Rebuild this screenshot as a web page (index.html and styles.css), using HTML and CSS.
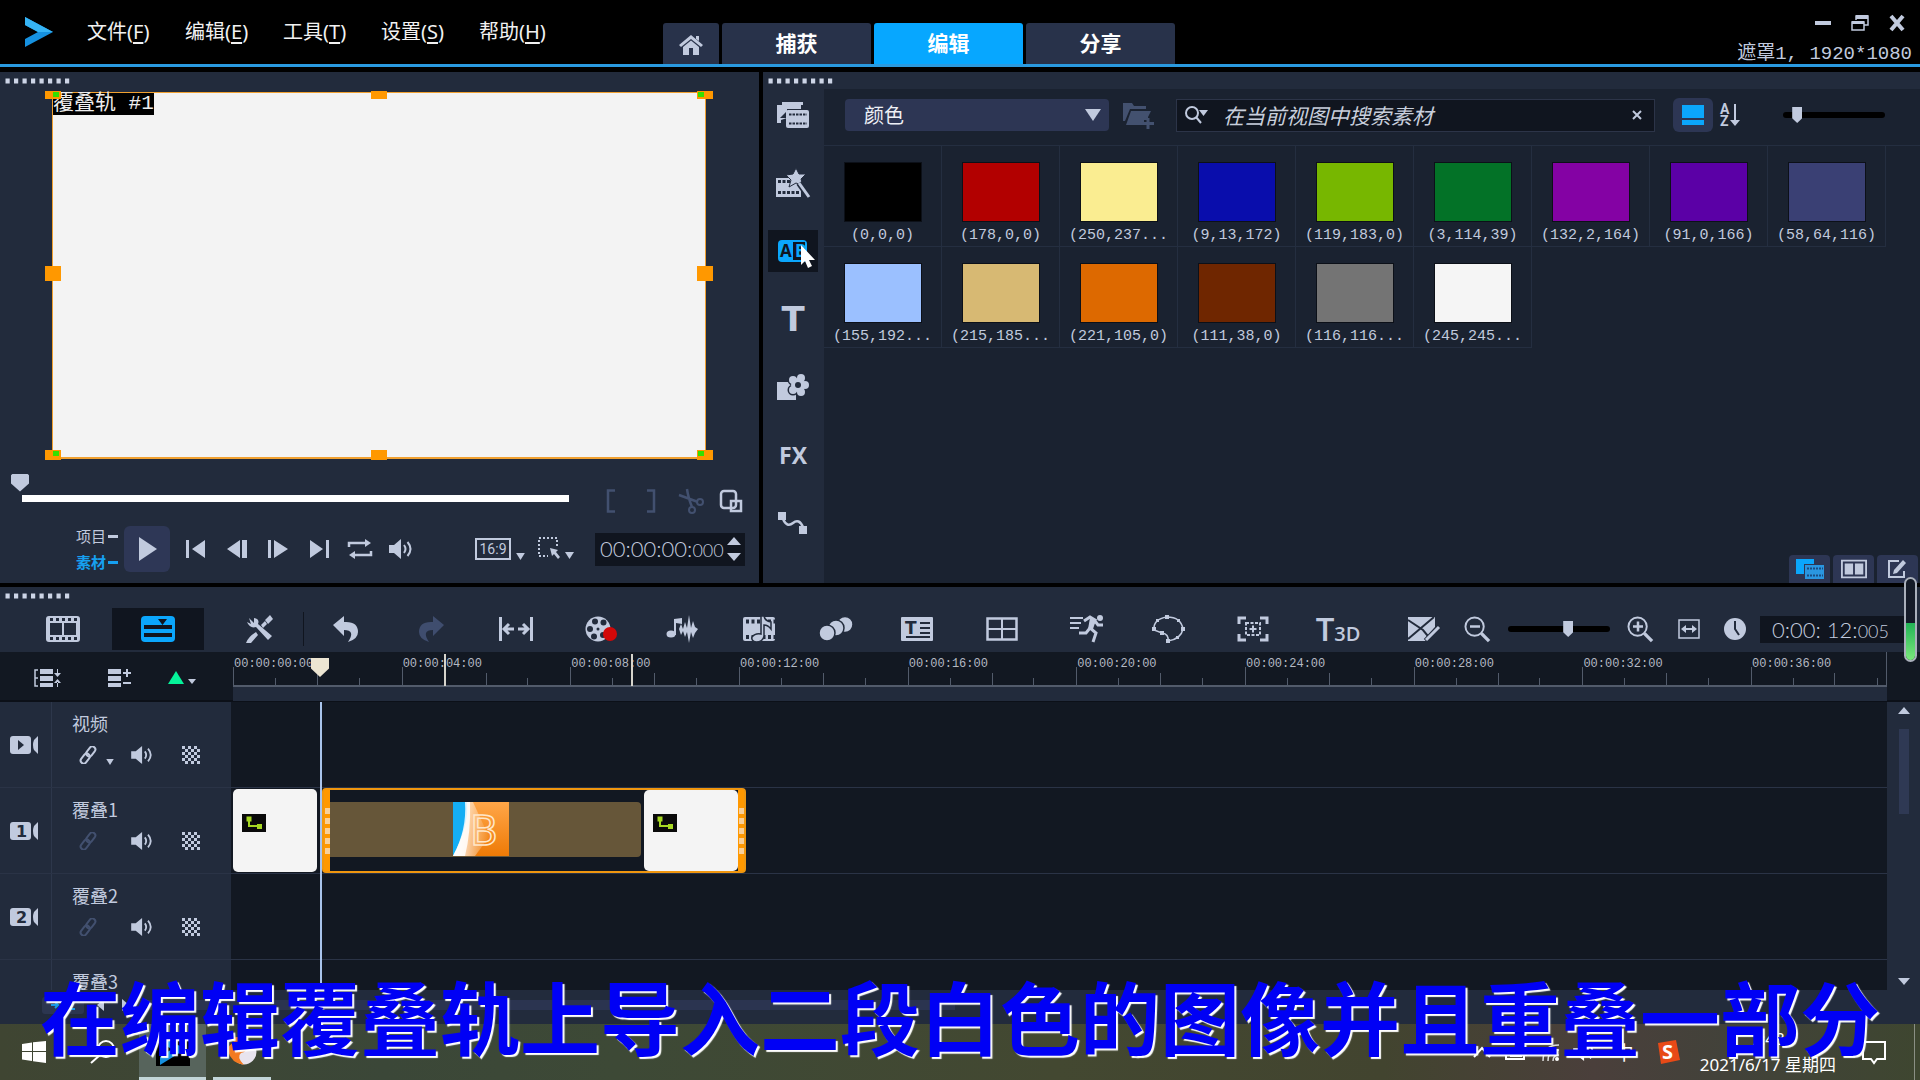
FILE: index.html
```html
<!DOCTYPE html>
<html lang="zh-CN">
<head>
<meta charset="utf-8">
<title>遮罩1</title>
<link rel="stylesheet" href="styles.css">
</head>
<body>
<svg class="defs" aria-hidden="true">
  <symbol id="grip" viewBox="0 0 64 6"><path d="M0 3H64" stroke="#cdd5e6" stroke-width="5" stroke-dasharray="4.2 4.3"/></symbol>
  <symbol id="down" viewBox="0 0 10 8"><path d="M0 0H10L5 8Z"/></symbol>
  <symbol id="speaker" viewBox="0 0 26 22"><path d="M0 7H5L12 1V21L5 15H0Z"/><path d="M15 7q3 4 0 8M18.500 4q6 7 0 14" fill="none" stroke="currentColor" stroke-width="2"/></symbol>
  <symbol id="link" viewBox="0 0 18 18"><g fill="none" stroke="currentColor" stroke-width="2" transform="rotate(-52 9 9)"><rect x="-1" y="6" width="11" height="6" rx="3"/><rect x="8" y="6" width="11" height="6" rx="3"/></g></symbol>
  <symbol id="checker" viewBox="0 0 18 18"><path d="M0 1.500H18M0 7.500H18M0 13.500H18" stroke="currentColor" stroke-width="3" stroke-dasharray="3 3"/><path d="M3 4.500H18M3 10.500H18M3 16.500H18" stroke="currentColor" stroke-width="3" stroke-dasharray="3 3"/></symbol>
  <symbol id="camera" viewBox="0 0 28 18"><rect width="21" height="18" rx="3"/><path d="M28 0V18L24 14Q22 9 24 4Z"/></symbol>
  <symbol id="path" viewBox="0 0 24 18"><rect width="24" height="18" fill="#0a0a0a"/><path d="M7 5V12H18" fill="none" stroke="#a6d822" stroke-width="2"/><rect x="4.500" y="2.500" width="5" height="5" fill="#a6d822"/><rect x="15" y="10" width="5" height="5" fill="#a6d822"/></symbol>
  <symbol id="lens" viewBox="0 0 28 28"><circle cx="11" cy="11" r="9.500" fill="none" stroke="currentColor" stroke-width="2"/><path d="M18 18L26 26" stroke="currentColor" stroke-width="3.500"/></symbol>
</svg>

<header class="titlebar">
  <svg class="logo" viewBox="0 0 28 30" width="28" height="30"><path d="M0 0L28 15L0 30V22L13 15L0 8Z" fill="#1691e0"/><path d="M0 0L28 15H13L0 8Z" fill="#36b4f5"/></svg>
  <nav class="menu">
    <a href="#">文件(<u>F</u>)</a><a href="#">编辑(<u>E</u>)</a><a href="#">工具(<u>T</u>)</a><a href="#">设置(<u>S</u>)</a><a href="#">帮助(<u>H</u>)</a>
  </nav>
  <nav class="tabs">
    <button class="tab home" aria-label="主页"><svg viewBox="0 0 24 20" width="24" height="20"><path d="M12 0L24 10L22 12L12 4L2 12L0 10Z"/><path d="M4 12L12 5.500L20 12V20H14V13H10V20H4ZM17 1H20V6L17 4Z"/></svg></button>
    <button class="tab">捕获</button>
    <button class="tab active">编辑</button>
    <button class="tab">分享</button>
  </nav>
  <div class="window-info">
    <div class="window-buttons">
      <button aria-label="最小化"><svg viewBox="0 0 18 18" width="18" height="18"><path d="M1 7H17V11H1Z"/></svg></button>
      <button aria-label="还原"><svg viewBox="0 0 18 18" width="18" height="18"><path d="M5 6V2H17V11H13M1 8H13V16H1Z" fill="none" stroke="currentColor" stroke-width="1.500"/><path d="M5 1H17V5H5ZM1 7H13V10H1Z"/></svg></button>
      <button aria-label="关闭"><svg viewBox="0 0 18 18" width="18" height="18"><path d="M3 2L15 16M15 2L3 16" stroke="currentColor" stroke-width="4"/></svg></button>
    </div>
    <div class="project-name">遮罩1, 1920*1080</div>
  </div>
</header>

<main class="workspace">
  <section class="preview">
    <svg class="grip"><use href="#grip"/></svg>
    <div class="canvas">
      <span class="canvas-label">覆叠轨 #1</span>
      <i class="handle tl"></i><i class="handle tc"></i><i class="handle tr"></i>
      <i class="handle ml"></i><i class="handle mr"></i>
      <i class="handle bl"></i><i class="handle bc"></i><i class="handle br"></i>
    </div>
    <div class="scrub-row">
      <input class="scrub" type="range" min="0" max="100" value="0" aria-label="播放位置">
      <div class="trim">
        <button class="dim" aria-label="标记开始"><svg viewBox="0 0 26 26" width="26" height="26"><path d="M17 2.500H10V23.500H17" fill="none" stroke="currentColor" stroke-width="2.500"/></svg></button>
        <button class="dim" aria-label="标记结束"><svg viewBox="0 0 26 26" width="26" height="26"><path d="M9 2.500H16V23.500H9" fill="none" stroke="currentColor" stroke-width="2.500"/></svg></button>
        <button class="dim" aria-label="分割"><svg viewBox="0 0 26 26" width="26" height="26"><path d="M9 1Q10 9 14 19M1 7L20 14" fill="none" stroke="currentColor" stroke-width="2.500"/><circle cx="22" cy="14" r="3" fill="none" stroke="currentColor" stroke-width="2"/><circle cx="14" cy="22" r="3" fill="none" stroke="currentColor" stroke-width="2"/></svg></button>
        <button aria-label="复制"><svg viewBox="0 0 26 26" width="26" height="26"><g fill="none" stroke="currentColor" stroke-width="2.500"><rect x="3" y="3" width="15" height="17" rx="3"/><rect x="13" y="13" width="10" height="10"/></g></svg></button>
      </div>
    </div>
    <div class="transport">
      <div class="mode"><button>项目<b></b></button><button class="on">素材<b></b></button></div>
      <button class="play" aria-label="播放"><svg viewBox="0 0 18 24" width="18" height="24"><path d="M0 0L18 12L0 24Z"/></svg></button>
      <div class="steps">
        <button aria-label="起始"><svg viewBox="0 0 24 20" width="24" height="20"><path d="M2 1H5V19H2ZM21 1V19L8 10Z"/></svg></button>
        <button aria-label="上一帧"><svg viewBox="0 0 24 20" width="24" height="20"><path d="M15 1V19L2 10ZM17 1H22V19H17Z"/></svg></button>
        <button aria-label="下一帧"><svg viewBox="0 0 24 20" width="24" height="20"><path d="M2 1H5V19H2ZM8 1V19L22 10Z"/></svg></button>
        <button aria-label="结束"><svg viewBox="0 0 24 20" width="24" height="20"><path d="M3 1V19L16 10ZM19 1H22V19H19Z"/></svg></button>
        <button aria-label="重复"><svg viewBox="0 0 24 20" width="24" height="20"><path d="M1 8V4H18M23 12V16H6" fill="none" stroke="currentColor" stroke-width="2.500"/><path d="M17 0L23 4L17 8ZM7 12L1 16L7 20Z"/></svg></button>
        <button aria-label="音量"><svg width="26" height="22"><use href="#speaker"/></svg></button>
      </div>
      <button class="ratio"><span>16:9</span><svg width="9" height="7"><use href="#down"/></svg></button>
      <button class="picker" aria-label="选择"><svg viewBox="0 0 36 24" width="36" height="24"><rect x="1" y="1" width="18" height="18" fill="none" stroke="currentColor" stroke-width="2" stroke-dasharray="2 2"/><path d="M10 10H22V23H10Z" fill="#222b3c"/><path d="M12 11L20 13L18 15L22 20L20 22L16 17L14 19Z"/><path d="M27 15H36L31.500 22Z"/></svg></button>
      <div class="timecode">
        <span>00:00:00:<small>000</small></span>
        <svg viewBox="0 0 14 24" width="14" height="24"><path d="M0 8L7 0L14 8ZM0 16H14L7 24Z"/></svg>
      </div>
    </div>
  </section>

  <section class="library">
    <svg class="grip"><use href="#grip"/></svg>
    <nav class="categories">
      <button aria-label="媒体"><svg viewBox="0 0 32 28" width="32" height="28"><path d="M5 1H26V4H5ZM0 4H24V8H10V17L4 19V22H0Z"/><path d="M3 17L9 11V17Z" fill="#222b3c"/><rect x="9" y="9" width="23" height="18" rx="2"/><path d="M12 13.500H30M12 22.500H30" stroke="#222b3c" stroke-width="2" stroke-dasharray="2.500 1"/></svg></button>
      <button aria-label="即时项目"><svg viewBox="0 0 34 28" width="34" height="28"><path d="M0 9H25V28H0Z"/><path d="M2 12.500H14M2 23.500H24" stroke="#222b3c" stroke-width="3" stroke-dasharray="3 1.500"/><path d="M20 -1L23 5L30 5L25 10L27 17L20 14L13 18L15 11L10 6L17 5Z" stroke="#222b3c"/><path d="M23 14L32 27" stroke="#222b3c" stroke-width="6"/><path d="M23 14L33 28" stroke="currentColor" stroke-width="3"/></svg></button>
      <button class="on" aria-label="转场"><svg viewBox="0 0 30 22" width="30" height="22"><rect width="29" height="22" rx="4"/><path d="M15 2H27V20H15Z" fill="#10151f"/><text x="2" y="17" font-size="17" font-weight="700" fill="#10151f">A</text><text x="17" y="17" font-size="17" font-weight="700">B</text></svg></button>
      <button class="letter">T</button>
      <button aria-label="覆叠"><svg viewBox="0 0 34 28" width="34" height="28"><path d="M1 9H20V27H1Z"/><g stroke="#222b3c" stroke-width="3"><circle cx="17" cy="7" r="4"/><circle cx="25" cy="5" r="4"/><circle cx="29" cy="12" r="4"/><circle cx="25" cy="19" r="4"/><circle cx="17" cy="17" r="4"/></g><g><circle cx="17" cy="7" r="4"/><circle cx="25" cy="5" r="4"/><circle cx="29" cy="12" r="4"/><circle cx="25" cy="19" r="4"/><circle cx="17" cy="17" r="4"/><circle cx="22" cy="12" r="7"/></g><circle cx="22" cy="12" r="3" fill="#222b3c"/></svg></button>
      <button class="fx">FX</button>
      <button aria-label="路径"><svg viewBox="0 0 30 22" width="30" height="22"><path d="M0 0H8V8H0ZM21 14H29V22H21Z"/><path d="M5 7Q9 16 15 11T25 15" fill="none" stroke="currentColor" stroke-width="2.500"/></svg></button>
    </nav>
    <div class="browser">
      <div class="filters">
        <label class="select"><select aria-label="图库"><option>颜色</option></select><svg width="16" height="12" viewBox="0 0 16 12"><path d="M0 0H16L8 12Z"/></svg></label>
        <button class="dim" aria-label="添加文件夹"><svg viewBox="0 0 32 28" width="32" height="28"><path d="M0 2H9L11 5H23V8H7L2 20H0ZM8 10H28L25 16V19H21V24H3Z" fill="#43516f"/><path d="M25 17V28M19.500 22.500H31" stroke="#43516f" stroke-width="3"/></svg></button>
        <div class="search">
          <svg viewBox="0 0 24 18" width="24" height="18"><circle cx="7" cy="7" r="6" fill="none" stroke="currentColor" stroke-width="2"/><path d="M11 11L16 17" stroke="currentColor" stroke-width="2"/><path d="M14 4H23L18.500 10Z"/></svg>
          <input type="text" placeholder="在当前视图中搜索素材" aria-label="搜索">
          <button aria-label="清除"><svg viewBox="0 0 10 10" width="10" height="10"><path d="M1 1L9 9M9 1L1 9" stroke="currentColor" stroke-width="2"/></svg></button>
        </div>
        <button class="view-toggle" aria-label="视图"><svg viewBox="0 0 22 20" width="22" height="20"><path d="M0 0H22V13H0ZM0 15H22V20H0Z" fill="#0ba6fc"/></svg></button>
        <button class="sort" aria-label="排序"><svg viewBox="0 0 20 24" width="20" height="24"><text x="0" y="11" font-size="14" font-weight="700">A</text><text x="0" y="23" font-size="14" font-weight="700">Z</text><path d="M14 1H16V17H20L15 23L10 17H14Z"/></svg></button>
        <input class="slim" type="range" value="10" aria-label="缩略图大小">
      </div>
      <div class="swatches">
        <button class="swatch"><i style="background:rgb(0,0,0)"></i>(0,0,0)</button>
        <button class="swatch"><i style="background:rgb(178,0,0)"></i>(178,0,0)</button>
        <button class="swatch"><i style="background:rgb(250,237,145)"></i>(250,237...</button>
        <button class="swatch"><i style="background:rgb(9,13,172)"></i>(9,13,172)</button>
        <button class="swatch"><i style="background:rgb(119,183,0)"></i>(119,183,0)</button>
        <button class="swatch"><i style="background:rgb(3,114,39)"></i>(3,114,39)</button>
        <button class="swatch"><i style="background:rgb(132,2,164)"></i>(132,2,164)</button>
        <button class="swatch"><i style="background:rgb(91,0,166)"></i>(91,0,166)</button>
        <button class="swatch"><i style="background:rgb(58,64,116)"></i>(58,64,116)</button>
        <button class="swatch"><i style="background:rgb(155,192,255)"></i>(155,192...</button>
        <button class="swatch"><i style="background:rgb(215,185,115)"></i>(215,185...</button>
        <button class="swatch"><i style="background:rgb(221,105,0)"></i>(221,105,0)</button>
        <button class="swatch"><i style="background:rgb(111,38,0)"></i>(111,38,0)</button>
        <button class="swatch"><i style="background:rgb(116,116,116)"></i>(116,116...</button>
        <button class="swatch"><i style="background:rgb(245,245,245)"></i>(245,245...</button>
      </div>
      <div class="panel-switch">
        <button aria-label="库"><svg viewBox="0 0 28 20" width="28" height="20"><path d="M0 0H18V5H8V15H0Z" fill="#0ba6fc"/><rect x="9" y="6" width="19" height="14" fill="#2a96e0"/><path d="M11 9.500H27M11 16.500H27" stroke="#1a4a80" stroke-width="2" stroke-dasharray="2 1"/></svg></button>
        <button aria-label="双面板"><svg viewBox="0 0 28 20" width="26" height="20"><path d="M1 1H27V19H1Z" fill="none" stroke="currentColor" stroke-width="2"/><path d="M4 4H13V16H4ZM15 4H24V16H15Z"/></svg></button>
        <button aria-label="选项"><svg viewBox="0 0 22 20" width="22" height="20"><path d="M12 2H2V18H17V12" fill="none" stroke="currentColor" stroke-width="2"/><path d="M7 11L16 1L19 4L10 14L6 15Z"/></svg></button>
      </div>
    </div>
    <svg class="cursor" viewBox="0 0 16 24" width="16" height="24"><path d="M1 0V20L5 16L8 23L12 21L9 15H15Z" fill="#fff"/></svg>
  </section>
</main>

<section class="timeline">
  <div class="meter"><i style="height:46%"></i></div>
  <svg class="grip"><use href="#grip"/></svg>
  <div class="toolbar">
    <button class="mode-btn" aria-label="故事板"><svg viewBox="0 0 34 26" width="34" height="26"><rect width="34" height="26" rx="3"/><path d="M4 3.500H32M4 22.500H32" stroke="#222b3c" stroke-width="3" stroke-dasharray="3 3"/><path d="M4 7H16V19H4ZM18 7H30V19H18Z" fill="#222b3c"/></svg></button>
    <button class="mode-btn on" aria-label="时间轴"><svg viewBox="0 0 34 26" width="34" height="26"><rect width="34" height="26" rx="4"/><path d="M3 9H31V13H3ZM3 17H31V21H3ZM17 3H26L21.500 9Z" fill="#10151f"/></svg></button>
    <button class="tools" aria-label="自定义"><svg viewBox="0 0 28 28" width="28" height="28"><path d="M3 3L8 8V3Q14 4 12 9L26 21L22 25L10 12Q4 14 1 7L5 9Z"/><path d="M19 5L24 0L27 4L22 9ZM15 10L19 6L21 9L17 13ZM10 17L12 20L5 28H0Q2 22 10 17Z"/></svg></button>
    <div class="tool-groups">
      <div class="group">
        <button aria-label="撤消"><svg viewBox="0 0 26 26" width="26" height="26"><path d="M11 0V6Q25 5 25 16Q25 23 15 26Q23 14 11 14V20L0 9Z"/></svg></button>
        <button class="dim" aria-label="重做"><svg viewBox="0 0 26 26" width="26" height="26"><path d="M15 0V6Q1 5 1 16Q1 23 11 26Q3 14 15 14V20L26 9Z" fill="#3f4d6e"/></svg></button>
        <button aria-label="适应"><svg viewBox="0 0 34 24" width="34" height="24"><path d="M1.500 0V24M32.500 0V24M5 12H15M19 12H29M10 7L5 12L10 17M24 7L29 12L24 17" fill="none" stroke="currentColor" stroke-width="3"/></svg></button>
        <button aria-label="录制"><svg viewBox="0 0 32 26" width="32" height="26"><circle cx="13" cy="13" r="12.500"/><g fill="#222b3c"><circle cx="10" cy="5.500" r="3"/><circle cx="18.500" cy="6.500" r="3"/><circle cx="5" cy="13" r="3"/><circle cx="9" cy="20.500" r="3"/><circle cx="18" cy="19" r="3"/><circle cx="13" cy="13" r="1.500"/></g><circle cx="25" cy="18" r="7" fill="#d30808"/></svg></button>
      </div>
      <div class="group close">
        <button aria-label="混音器"><svg viewBox="0 0 32 28" width="32" height="28"><path d="M8 4L16 3V9L10 8V20H8Z"/><ellipse cx="5" cy="19" rx="4.500" ry="3.500"/><path d="M13 14L15 9L17 14L19 7L21 13L23 0L25 13L27 6L29 12L32 14L29 18L27 23L25 17L23 28L21 17L19 22L17 16L15 20Z"/></svg></button>
        <button aria-label="自动音乐"><svg viewBox="0 0 32 24" width="32" height="24"><rect width="32" height="24" rx="2"/><path d="M3 4.500H32M3 20H32" stroke="#222b3c" stroke-width="4" stroke-dasharray="3 2.500"/><path d="M18 -1H21Q22 4 28 5V12Q25 8 21 8V19Q20 25 13 25Q8 24 9 20Q12 16 18 17Z" stroke="#222b3c" stroke-width="1.500"/></svg></button>
        <button aria-label="运动"><svg viewBox="0 0 34 26" width="34" height="26"><g stroke="#222b3c" stroke-width="1.500"><circle cx="26" cy="8.500" r="8"/><circle cx="17" cy="12" r="8"/><circle cx="8" cy="17" r="8"/></g></svg></button>
      </div>
      <div class="group">
        <button aria-label="字幕"><svg viewBox="0 0 32 24" width="32" height="24"><rect width="32" height="24" rx="1"/><path d="M19 6H29M19 11H29M19 16H29M5 20H29" stroke="#222b3c" stroke-width="2"/><text class="bold" x="4" y="17" font-size="17">T</text></svg></button>
        <button aria-label="多视图"><svg viewBox="0 0 32 24" width="32" height="24"><path d="M1.500 1.500H30.500V22.500H1.500Z" fill="none" stroke="currentColor" stroke-width="2.500"/><path d="M16 2V22M2 12H30" stroke="currentColor" stroke-width="2"/></svg></button>
        <button aria-label="变速"><svg viewBox="0 0 34 28" width="34" height="28"><circle cx="30" cy="3" r="3"/><path d="M0 3H13M0 8H11M0 13H9" stroke="currentColor" stroke-width="2"/><path d="M14 6L20 2L25 5L20 13L26 18L23 27M20 13L16 18H9M25 6L28 10H33" fill="none" stroke="currentColor" stroke-width="3"/><path d="M20 3L26 5L23 14H18Z"/></svg></button>
      </div>
      <div class="group">
        <button aria-label="遮罩"><svg viewBox="0 0 34 28" width="34" height="28"><path d="M3 15Q2 4 16 2Q30 2 32 14Q30 24 17 26Q18 19 11 18Z" fill="none" stroke="currentColor" stroke-width="1.500"/><path d="M14 0H18V4H14ZM26 4H29V7H26ZM30 12H34V16H30ZM25 21H28V24H25ZM15 24H19V28H15ZM9 16H13V20H9ZM1 12H5V16H1ZM5 4H8V7H5Z"/></svg></button>
        <button aria-label="跟踪"><svg viewBox="0 0 32 26" width="32" height="26"><path d="M2 8V2H9M23 2H30V8M30 18V24H23M9 24H2V18" fill="none" stroke="currentColor" stroke-width="3"/><path d="M9 7H23V19H9Z" fill="none" stroke="currentColor" stroke-width="2" stroke-dasharray="3 1.500"/><path d="M16 9.500V16.500M12.500 13H19.500" stroke="currentColor" stroke-width="2"/></svg></button>
        <button class="t3d">T<small>3D</small></button>
      </div>
    </div>
    <div class="zoom-tools">
      <button aria-label="蒙版创建器"><svg viewBox="0 0 32 24" width="32" height="24"><path d="M0 0H27V14L17 24H0Z"/><path d="M0 3L15 13L24 24M26 0L0 22" fill="none" stroke="#222b3c" stroke-width="2"/><path d="M18 24L31 10" stroke="#222b3c" stroke-width="6"/><path d="M18 23L31 10" stroke="currentColor" stroke-width="3"/></svg></button>
      <button aria-label="缩小"><svg width="27" height="27"><use href="#lens"/><path d="M6 10.500H16" stroke="currentColor" stroke-width="2.500"/></svg></button>
      <input class="slim" type="range" value="60" aria-label="缩放">
      <button aria-label="放大"><svg width="27" height="27"><use href="#lens"/><path d="M6 10.500H16M11 5.500V15.500" stroke="currentColor" stroke-width="2.500"/></svg></button>
      <button aria-label="适合窗口"><svg viewBox="0 0 22 20" width="22" height="20"><path d="M1 1H21V19H1Z" fill="none" stroke="currentColor" stroke-width="1.500"/><path d="M5 10H17" stroke="currentColor" stroke-width="2"/><path d="M3 10L8 6V14ZM19 10L14 6V14Z"/></svg></button>
      <button aria-label="时长"><svg viewBox="0 0 22 22" width="22" height="22"><circle cx="11" cy="11" r="11"/><path d="M11 3V11L15 17" fill="none" stroke="#222b3c" stroke-width="2"/></svg></button>
      <div class="timecode">0:00: 12:<small>005</small></div>
    </div>
  </div>

  <div class="ruler-row">
    <div class="track-tools">
      <button aria-label="轨道管理"><svg viewBox="0 0 28 18" width="28" height="18"><path d="M4 1H1V17H4M1 9H4" fill="none" stroke="currentColor" stroke-width="1.500"/><path d="M6 0H19V5H6ZM6 7H19V12H6ZM6 14H19V18H6ZM20 4H27L23.500 8ZM20 14H27L23.500 10ZM23 0H24V5H23ZM23 13H24V18H23Z"/></svg></button>
      <button aria-label="添加轨道"><svg viewBox="0 0 24 18" width="24" height="18"><path d="M0 0H13V5H0ZM0 7H13V12H0ZM0 14H13V18H0Z"/><path d="M15 4H23M19 0V8M15 14H23" stroke="currentColor" stroke-width="2"/></svg></button>
      <button aria-label="标记"><svg viewBox="0 0 28 14" width="28" height="14"><path d="M0 13L8 0L16 13Z" fill="#05f39a"/><path d="M20 8H28L24 13Z"/></svg></button>
    </div>
    <div class="ruler">
      <span>00:00:00:00</span><span>00:00:04:00</span><span>00:00:08:00</span><span>00:00:12:00</span><span>00:00:16:00</span><span>00:00:20:00</span><span>00:00:24:00</span><span>00:00:28:00</span><span>00:00:32:00</span><span class="last">00:00:36:00</span>
      <i class="mark" style="left:211px"></i><i class="mark" style="left:398px"></i>
      <i class="playhead"></i>
    </div>
  </div>

  <div class="tracks">
    <div class="track-list">
      <div class="track">
        <div class="track-type"><svg width="28" height="18"><use href="#camera"/><path d="M8 4L14 9L8 14Z" fill="#222b3c"/></svg></div>
        <div class="track-head"><span>视频</span>
          <div><button aria-label="链接"><svg width="18" height="18"><use href="#link"/></svg></button><svg class="mini" width="8" height="6"><use href="#down"/></svg><button aria-label="静音"><svg width="24" height="20"><use href="#speaker"/></svg></button><button aria-label="透明"><svg width="18" height="18"><use href="#checker"/></svg></button></div></div>
        <div class="lane"></div>
      </div>
      <div class="track">
        <div class="track-type"><svg width="28" height="18"><use href="#camera"/><text class="bold" x="6" y="15" font-size="16">1</text></svg></div>
        <div class="track-head"><span>覆叠1</span>
          <div><button class="dim" aria-label="链接"><svg width="18" height="18"><use href="#link"/></svg></button><i class="mini"></i><button aria-label="静音"><svg width="24" height="20"><use href="#speaker"/></svg></button><button aria-label="透明"><svg width="18" height="18"><use href="#checker"/></svg></button></div></div>
        <div class="lane">
          <div class="clip" style="width:84px"><svg width="24" height="18"><use href="#path"/></svg></div>
          <div class="selection" style="width:424px">
            <i class="edge"></i>
            <div class="transition"><svg viewBox="0 0 56 54" width="56" height="54"><defs><linearGradient id="warm" x2="0" y2="1"><stop stop-color="#ffa648"/><stop offset="1" stop-color="#ee7a06"/></linearGradient><linearGradient id="glow"><stop stop-color="#fff"/><stop offset="1" stop-color="#fff" stop-opacity="0"/></linearGradient></defs><rect width="56" height="54" fill="url(#warm)"/><path d="M12 0H20L36 35L22 54H0Z" fill="url(#glow)"/><path d="M0 0H14Q16 24 0 54Z" fill="#15aef4"/><path d="M12 0H17Q18 30 12 54H0Q14 28 12 0Z" fill="#fff" opacity=".85"/><text x="17" y="43" font-size="42" fill="none" stroke="#ffe6c8" stroke-width="1.500">B</text></svg></div>
            <div class="clip"><svg width="24" height="18"><use href="#path"/></svg></div>
            <i class="edge"></i>
          </div>
        </div>
      </div>
      <div class="track">
        <div class="track-type"><svg width="28" height="18"><use href="#camera"/><text class="bold" x="6" y="15" font-size="16">2</text></svg></div>
        <div class="track-head"><span>覆叠2</span>
          <div><button class="dim" aria-label="链接"><svg width="18" height="18"><use href="#link"/></svg></button><i class="mini"></i><button aria-label="静音"><svg width="24" height="20"><use href="#speaker"/></svg></button><button aria-label="透明"><svg width="18" height="18"><use href="#checker"/></svg></button></div></div>
        <div class="lane"></div>
      </div>
      <div class="track cut">
        <div class="track-type"></div>
        <div class="track-head"><span>覆叠3</span></div>
        <div class="lane"></div>
      </div>
      <i class="play-line"></i>
    </div>
    <div class="v-scroll"><svg width="12" height="7" viewBox="0 0 12 7"><path d="M0 7L6 0L12 7Z"/></svg><i></i><svg width="12" height="7" viewBox="0 0 12 7"><path d="M0 0H12L6 7Z"/></svg></div>
  </div>
  <div class="h-scroll">
    <button aria-label="添加"><svg viewBox="0 0 24 10" width="24" height="10"><path d="M0 5H6M4 2L7 5L4 8M9 9H24M12 9V3M16 9V0M20 9V5" fill="none" stroke="#1598e8" stroke-width="2"/></svg></button>
    <svg width="7" height="12" viewBox="0 0 7 12"><path d="M7 0V12L0 6Z"/></svg>
    <svg width="7" height="12" viewBox="0 0 7 12"><path d="M0 0V12L7 6Z"/></svg>
    <i></i>
  </div>
</section>

<footer class="taskbar">
  <button aria-label="开始"><svg viewBox="0 0 24 22" width="24" height="22"><path d="M0 3L10 1.500V10H0ZM11 1.300L24 0V10H11ZM0 11H10V20L0 18.500ZM11 11H24V22L11 20.300Z" fill="#fff"/></svg></button>
  <button aria-label="搜索"><svg viewBox="0 0 26 24" width="26" height="24"><circle cx="16" cy="9" r="8" fill="none" stroke="#fff" stroke-width="2"/><path d="M10 15L1 23" stroke="#fff" stroke-width="2"/></svg></button>
  <button class="app current" aria-label="会声会影"><svg viewBox="0 0 34 30" width="34" height="30"><rect width="34" height="30" fill="#000"/><path d="M4 0L30 13L4 29V21L16 13L4 7Z" fill="#1691e0"/></svg></button>
  <button class="app" aria-label="浏览器"><svg viewBox="0 0 30 28" width="30" height="28"><circle cx="17" cy="15" r="12.500" fill="#e8e4ee"/><path d="M4 1Q20 -3 21 8Q20 15 14 16Q9 20 17 28Q4 26 1 14Q1 8 7 5Z" fill="#f37a21"/><path d="M8 6Q17 5 15 12L9 14Z" fill="#ffc081"/></svg></button>
  <div class="tray">
    <svg viewBox="0 0 18 12" width="18" height="12"><path d="M1 11L9 2L17 11" fill="none" stroke="#fff" stroke-width="2"/></svg>
    <svg viewBox="0 0 22 16" width="22" height="16"><path d="M1 4H19V15H1Z" fill="none" stroke="#fff" stroke-width="2"/><path d="M5 6H17V13H5ZM19 7H22V12H19Z" fill="#fff"/></svg>
    <svg viewBox="0 0 18 18" width="18" height="18"><path d="M2 18Q2 2 18 2M7 18Q7 7 18 7M12 18Q12 12 18 12" fill="none" stroke="#ddd" stroke-width="1.500"/><circle cx="16" cy="16" r="2" fill="#fff"/></svg>
    <svg width="24" height="20"><use href="#speaker"/></svg>
    <span>中</span>
    <svg viewBox="0 0 24 24" width="24" height="24"><path d="M2 3L20 0L24 20L5 24Z" fill="#e84a17"/><text x="6" y="19" font-size="20" font-weight="700" fill="#fff">S</text></svg>
    <div class="clock"><span>7:48</span><span>2021/6/17 星期四</span></div>
    <svg viewBox="0 0 24 24" width="24" height="24"><path d="M1 2H23V19H15L12 23L9 19H1Z" fill="none" stroke="#fff" stroke-width="2"/></svg>
    <i class="desktop"></i>
  </div>
</footer>
<p class="subtitle">在编辑覆叠轨上导入二段白色的图像并且重叠一部分</p>
</body>
</html>
```
FILE: styles.css
```css
* { box-sizing: border-box; }

body {
  margin: 0;
  min-height: 100vh;
  display: flex;
  flex-direction: column;
  position: relative;
  overflow: hidden;
  background: #000;
  color: #c1cade;
  font-family: "Noto Sans", "Noto Sans CJK SC", sans-serif;
  font-size: 20px;
}

button {
  display: flex;
  align-items: center;
  justify-content: center;
  padding: 0;
  border: 0;
  background: none;
  color: inherit;
  font: inherit;
}

svg { display: block; fill: currentColor; flex: none; overflow: visible; }
svg .bold { fill: #222b3c; font-family: "DejaVu Sans", sans-serif; font-weight: 700; }
i { display: block; }
.defs { position: absolute; width: 0; height: 0; }
.dim { color: #42506f; }
.grip { width: 65px; height: 6px; margin: 6px 0 0 5px; }

/* Title bar */
.titlebar {
  display: flex;
  height: 67px;
  border-bottom: 3px solid #2a9ae0;
  margin-bottom: 5px;
}
.logo { margin: 17px 34px 0 25px; }
.menu { display: flex; width: 576px; padding-top: 18px; }
.menu a { width: 98px; color: #f2f2f2; text-decoration: none; line-height: 28px; white-space: nowrap; }
.menu u { text-underline-offset: 3px; }
.tabs { display: flex; gap: 3px; padding-top: 23px; }
.tab {
  width: 149px;
  border-radius: 3px 3px 0 0;
  background: #28324a;
  color: #fff;
  font-size: 21px;
  font-weight: 700;
  padding-bottom: 4px;
}
.tab.home { width: 56px; color: #c1cade; padding: 2px 0 0; }
.tab.active { background: #07a7ff; }
.window-info { margin-left: auto; padding: 14px 8px 0 0; }
.window-buttons { display: flex; justify-content: flex-end; gap: 19px; padding-right: 6px; }
.project-name { font: 19px/24px "Liberation Mono", "Noto Sans CJK SC", monospace; margin-top: 10px; white-space: nowrap; }

/* Upper workspace */
.workspace { display: grid; grid-template-columns: 759fr 1157fr; gap: 4px; height: 511px; margin-bottom: 4px; }
.preview { background: #222b3c; display: flex; flex-direction: column; }
.canvas {
  position: relative;
  margin: 8px 53px 0 52px;
  height: 367px;
  background: #f3f3f3;
  border: 1px solid #f0a030;
  border-bottom-width: 2px;
}
.canvas-label {
  display: block;
  width: max-content;
  background: #000;
  color: #eee;
  font: 21px/22px "Liberation Mono", "Noto Sans CJK SC", monospace;
}
.handle { position: absolute; width: 16px; height: 10px; background: #ff9800; }
.tl, .tc, .tr { top: -2px; height: 8px; }
.ml, .mr { top: 173px; height: 15px; }
.bl, .bc, .br { bottom: -3px; }
.tl, .ml, .bl { left: -8px; }
.tc, .bc { left: calc(50% - 8px); }
.tr, .mr, .br { right: -8px; }
.tl::after, .tr::after, .bl::after, .br::after {
  content: "";
  position: absolute;
  top: 1px;
  left: 8px;
  width: 6px;
  height: 5px;
  background: #35e000;
}
.tr::after, .br::after { left: 1px; }

.scrub-row { display: flex; justify-content: space-between; padding: 14px 15px 0 11px; }
.scrub { appearance: none; width: 558px; height: 30px; margin: 0; background: none; }
.scrub::-webkit-slider-runnable-track {
  height: 7px;
  margin-top: 20px;
  background: linear-gradient(to right, transparent 11px, #fff 11px);
}
.scrub::-webkit-slider-thumb {
  appearance: none;
  width: 18px;
  height: 18px;
  margin-top: -21px;
  background: #c1cade;
  clip-path: polygon(10% 0, 90% 0, 100% 10%, 100% 55%, 50% 100%, 0 55%, 0 10%);
}
.trim { display: flex; gap: 14px; padding-top: 15px; }

.transport { display: flex; align-items: center; padding: 12px 14px 0 76px; }
.mode { display: flex; flex-direction: column; gap: 6px; width: 48px; font-size: 15px; line-height: 20px; }
.mode button { gap: 2px; justify-content: flex-start; }
.mode b { width: 10px; height: 3px; background: currentColor; }
.mode .on { color: #16a0f0; font-weight: 700; }
.play { width: 46px; height: 46px; border-radius: 6px; background: #2e3756; }
.play svg { margin-left: 2px; }
.steps { display: flex; gap: 17px; margin-left: 14px; }
.ratio { margin-left: auto; gap: 5px; align-items: flex-end; }
.ratio span { border: 2px solid; width: 36px; font: 14px/18px Roboto, sans-serif; text-align: center; }
.picker { margin: 0 21px 0 13px; }
.timecode {
  display: flex;
  align-items: center;
  justify-content: space-between;
  padding: 0 4px 0 5px;
  width: 150px;
  height: 33px;
  background: #10151f;
  font: 300 22px/33px Lato, sans-serif;
}
.timecode small { font-size: 18px; }

/* Library */
.library {
  position: relative;
  display: grid;
  grid-template: 17px 1fr / 61px 1fr;
  background: #222b3c;
}
.library .grip { grid-column: 1 / 3; }
.categories { display: flex; flex-direction: column; gap: 26px; padding: 5px 6px 0 5px; }
.categories button { height: 42px; font-family: "Open Sans", sans-serif; font-weight: 700; }
.categories .on { background: #10151f; color: #0ba6fc; }
.categories .letter { font: 700 34px/42px "DejaVu Sans", sans-serif; }
.categories .fx { font-size: 23px; }
.browser { display: flex; flex-direction: column; background: #1a2230; }
.filters { display: flex; align-items: center; height: 56px; padding: 0 35px 4px 21px; }
.select { position: relative; width: 264px; margin-right: 14px; }
.select select {
  appearance: none;
  display: block;
  width: 100%;
  height: 32px;
  padding: 0 19px;
  border: 0;
  border-radius: 4px;
  background: #2d3654;
  color: #eef0f6;
  font: 20px/32px "Noto Sans CJK SC", sans-serif;
}
.select svg { position: absolute; right: 8px; top: 10px; pointer-events: none; }
.search {
  display: flex;
  flex: 1;
  align-items: center;
  height: 33px;
  margin: 0 18px 0 21px;
  padding: 0 12px 0 8px;
  border: 1px solid #2c3448;
  background: #10151f;
}
.search input {
  flex: 1;
  min-width: 0;
  padding: 0 14px;
  border: 0;
  background: none;
  font: italic 21px/30px "Noto Sans CJK SC", sans-serif;
}
.search input::placeholder { color: #c8cfdc; }
.view-toggle { width: 40px; height: 34px; border-radius: 6px; background: #2d3654; }
.sort { margin: 0 43px 0 7px; font-family: Roboto, sans-serif; }
.slim { appearance: none; width: 102px; height: 20px; margin: 0; background: none; }
.slim::-webkit-slider-runnable-track { height: 6px; border-radius: 3px; background: #000; }
.slim::-webkit-slider-thumb {
  appearance: none;
  width: 10px;
  height: 16px;
  margin-top: -5px;
  background: #c1cade;
  clip-path: polygon(0 0, 100% 0, 100% 70%, 50% 100%, 0 70%);
}
.swatches { display: grid; grid-template-columns: repeat(auto-fill, 118px); border-top: 1px solid #242e40; }
.swatch {
  flex-direction: column;
  justify-content: flex-start;
  height: 101px;
  padding-top: 16px;
  border: solid #242e40;
  border-width: 0 1px 1px 0;
  font: 15px/20px "Liberation Mono", monospace;
}
.swatch i { width: 78px; height: 60px; margin-bottom: 4px; border: 1px solid #0c1018; }
.panel-switch { display: flex; justify-content: flex-end; gap: 3px; margin-top: auto; padding-right: 2px; }
.panel-switch button { width: 41px; height: 28px; background: #2d3654; border-radius: 4px 4px 0 0; }
.cursor { position: absolute; left: 37px; top: 173px; }

/* Timeline */
.timeline { position: relative; display: flex; flex: 1; flex-direction: column; background: #222b3c; }
.meter {
  position: absolute;
  z-index: 2;
  right: 3px;
  top: -10px;
  display: flex;
  align-items: flex-end;
  width: 13px;
  height: 85px;
  border: 2px solid #aab0bb;
  border-radius: 7px;
  background: #151b28;
}
.meter i { flex: 1; border-radius: 0 0 5px 5px; background: linear-gradient(#22b455, #7be87c); }
.toolbar { display: flex; align-items: center; height: 46px; margin-top: 7px; padding: 0 16px 0 17px; }
.mode-btn { width: 92px; height: 42px; }
.mode-btn + .mode-btn { margin-left: 3px; }
.mode-btn.on { background: #10151f; color: #0ba6fc; }
.tools { width: 100px; height: 34px; padding-left: 12px; border-right: 1px solid #10151f; }
.tool-groups { display: flex; gap: 45px; margin-left: 24px; }
.group { display: flex; gap: 49px; }
.group.close { gap: 41px; }
.group button { width: 36px; height: 36px; }
.group .t3d { font: 600 33px/36px "Open Sans", sans-serif; }
.t3d small { font-size: 20px; padding-top: 10px; }
.zoom-tools { display: flex; align-items: center; gap: 24px; margin-left: auto; }
.zoom-tools .slim { margin: 0 -7px; }
.zoom-tools .timecode { width: 144px; height: 27px; margin-left: -10px; padding: 0 14px 0 12px; line-height: 27px; justify-content: flex-start; white-space: pre; align-items: baseline; }

.ruler-row { display: flex; height: 48px; background: #121822; }
.track-tools { display: flex; align-items: center; width: 233px; padding: 4px 0 0 34px; }
.track-tools button:nth-child(2) { margin: 0 36px 0 46px; }
.ruler {
  position: relative;
  display: grid;
  grid-template-columns: repeat(9, 5fr) 4fr;
  flex: 1;
  height: 35px;
  margin-right: 33px;
  border: solid #525b6b;
  border-width: 0 1px 2px 0;
  box-shadow: 0 14px #222b3c;
}
.ruler span {
  --tick: linear-gradient(#525b6b, #525b6b);
  padding: 5px 0 0 1px;
  font: 12px/14px "Liberation Mono", monospace;
  color: #b4b9c2;
  background:
    var(--tick) 0 100% / 1px 18px,
    var(--tick) 25% 100% / 1px 7px,
    var(--tick) 50% 100% / 1px 12px,
    var(--tick) 75% 100% / 1px 7px;
  background-repeat: no-repeat;
}
.ruler .last { background-position: 0 100%, 31% 100%, 62% 100%, 94% 100%; }
.mark { position: absolute; top: 2px; bottom: -1px; width: 2px; background: #d6d4cc; }
.playhead {
  position: absolute;
  left: 78px;
  top: 6px;
  width: 18px;
  height: 19px;
  background: #ece5d2;
  clip-path: polygon(0 0, 100% 0, 100% 55%, 50% 100%, 0 55%);
}

.tracks { display: flex; border-top: 2px solid #0c1018; height: 290px; }
.track-list { position: relative; flex: 1; overflow: hidden; background: #121822; }
.track { display: flex; height: 86px; border-bottom: 1px solid #2a3346; }
.track.cut { height: 30px; border: 0; overflow: hidden; }
.track-type {
  display: flex;
  align-items: center;
  width: 52px;
  padding-left: 10px;
  border-right: 1px solid #2d374b;
  background: #222b3c;
}
.track-head { width: 179px; padding: 9px 0 0 20px; background: #222b3c; font: 18px/24px "Noto Sans CJK SC", sans-serif; }
.track-head span { display: block; height: 34px; }
.track-head div { display: flex; align-items: center; padding-left: 7px; }
.mini { width: 8px; margin: 14px 17px 0 9px; }
.track-head button:last-child { margin-left: 27px; }
.lane { display: flex; flex: 1; gap: 5px; padding-left: 2px; align-items: stretch; }
.clip { margin: 1px 0; padding: 25px 0 0 9px; background: #f4f4f4; border-radius: 5px; }
.selection { display: flex; border: 2px solid #ef960f; border-radius: 4px; background: #121822; }
.selection .clip { width: 94px; margin: 0; padding-top: 24px; }
.edge {
  width: 6px;
  background: repeating-linear-gradient(#f8d09a 0 6px, #ff9800 6px 10px) center 18px / 5px 46px no-repeat, #ff9800;
}
.transition { display: flex; flex: 1; justify-content: center; margin: 12px 3px 14px 0; padding-right: 10px; border-radius: 0 4px 4px 0; background: #665639; }
.play-line { position: absolute; left: 320px; top: 0; bottom: 0; width: 2px; background: #a9c4ec; }
.v-scroll { display: flex; flex-direction: column; align-items: center; width: 33px; padding: 5px 0; }
.v-scroll i { width: 10px; height: 85px; margin: 15px 0 auto; background: #2f3954; }
.h-scroll { display: flex; align-items: center; height: 33px; padding: 0 0 3px 42px; }
.h-scroll button { width: 42px; height: 17px; background: #2c3650; border-radius: 3px; }
.h-scroll svg + svg { margin-left: 18px; }
.h-scroll > svg:nth-child(2) { margin-left: 13px; }
.h-scroll i { width: 820px; height: 10px; margin-left: 6px; background: #2b3450; }

/* Taskbar */
.taskbar {
  display: flex;
  height: 56px;
  padding-left: 22px;
  background: linear-gradient(to right, #3f4532, #3b4738 20%, #3d4936 32%, #434831 55%, #42442f 72%, #4a3f3b 83%, #42423a 90%, #3e4630);
}
.taskbar > button:nth-child(2) { margin: 0 23px 0 44px; }
.app { width: 58px; border-bottom: 3px solid #c2d5d8; }
.app.current { width: 67px; margin-right: 7px; background: #57645c; }
.tray { display: flex; align-items: center; gap: 14px; margin-left: auto; color: #fff; }
.tray > span { font-size: 19px; margin: 0 8px 0 4px; }
.clock { display: flex; flex-direction: column; align-items: center; margin: 0 12px 0 6px; font-size: 17px; line-height: 26px; white-space: nowrap; }
.desktop { width: 6px; align-self: stretch; margin-left: 14px; border-left: 1px solid #8a8f84; }

.subtitle {
  position: absolute;
  left: 0;
  right: 0;
  bottom: 20px;
  margin: 0;
  color: #0000f5;
  font: 700 80px/92px "Noto Sans CJK SC", sans-serif;
  text-align: center;
  text-shadow: 2px 2px 1px #fff;
  white-space: nowrap;
}
```
